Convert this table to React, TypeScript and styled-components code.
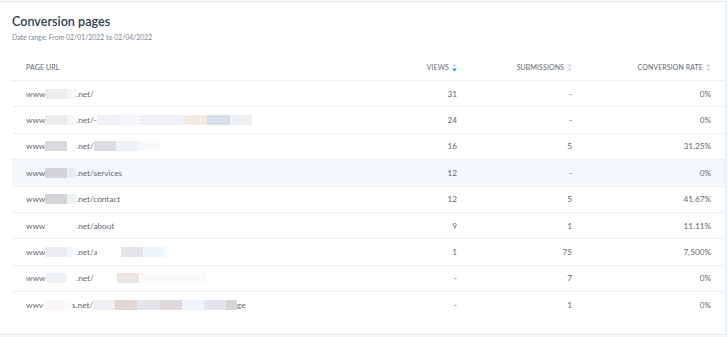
import React, { FC } from 'react';
import styled, { createGlobalStyle } from 'styled-components';

type Seg = string | { w: number; c: string };

interface PageRow {
	url: Seg[];
	views: string;
	submissions: string;
	rate: string;
	active?: boolean;
}

const rows: PageRow[] = [
	{ url: ['www', { w: 22, c: '#ececee' }, { w: 9, c: '#f6f7f9' }, '.net/'], views: '31', submissions: '-', rate: '0%' },
	{
		url: [
			'www',
			{ w: 22, c: '#ececee' },
			{ w: 9, c: '#f6f7f9' },
			'.net/-',
			{ w: 22, c: '#eff1f4' },
			{ w: 22, c: '#f3f7fb' },
			{ w: 44, c: '#eff1f4' },
			{ w: 22, c: '#f3e9e0' },
			{ w: 23, c: '#d9dfe8' },
			{ w: 22, c: '#eef0f3' },
		],
		views: '24',
		submissions: '-',
		rate: '0%',
	},
	{
		url: ['www', { w: 22, c: '#d9d9dd' }, { w: 9, c: '#ffffff' }, '.net/', { w: 22, c: '#dcdce0' }, { w: 22, c: '#eef2f5' }, { w: 22, c: '#f7f9fb' }],
		views: '16',
		submissions: '5',
		rate: '31.25%',
	},
	{
		url: ['www', { w: 22, c: '#d4d4d8' }, { w: 9, c: '#e9eef2' }, '.net/services'],
		views: '12',
		submissions: '-',
		rate: '0%',
		active: true,
	},
	{ url: ['www', { w: 22, c: '#d4d4d8' }, { w: 9, c: '#eaf3f0' }, '.net/contact'], views: '12', submissions: '5', rate: '41.67%' },
	{ url: ['www', { w: 31, c: '#ffffff' }, '.net/about'], views: '9', submissions: '1', rate: '11.11%' },
	{
		url: ['www', { w: 22, c: '#ececf0' }, { w: 9, c: '#f3f8fb' }, '.net/a', { w: 24, c: '#ffffff' }, { w: 22, c: '#e2e4e8' }, { w: 22, c: '#eef6fb' }],
		views: '1',
		submissions: '75',
		rate: '7,500%',
	},
	{
		url: ['www', { w: 22, c: '#eef2f6' }, { w: 9, c: '#ffffff' }, '.net/', { w: 23, c: '#ffffff' }, { w: 22, c: '#ebe6e2' }, { w: 67, c: '#fbf9f7' }],
		views: '-',
		submissions: '7',
		rate: '0%',
	},
	{
		url: [
			'wwv',
			{ w: 22, c: '#fbf7f8' },
			{ w: 7, c: '#fdfbfc' },
			's.net/',
			{ w: 22, c: '#eef0f4' },
			{ w: 22, c: '#e2d6d2' },
			{ w: 23, c: '#e3e3e8' },
			{ w: 22, c: '#dcd8dc' },
			{ w: 22, c: '#eef4fa' },
			{ w: 22, c: '#e3e5ea' },
			{ w: 11, c: '#d6d4d8' },
			'ge',
		],
		views: '-',
		submissions: '1',
		rate: '0%',
	},
];

const SortIcon: FC<{ active?: boolean }> = ({ active }) => (
	<SortSvg width="5" height="9" viewBox="0 0 5 9">
		<path d="M2.5 0.5 L4.8 3.4 H0.2 Z" fill="#cbd6e2" />
		<path d="M2.5 8.5 L4.8 5.6 H0.2 Z" fill={active ? '#00a4bd' : '#cbd6e2'} />
	</SortSvg>
);

const App: FC = () => {
	return (
		<>
			<GlobalStyle />
			<Card>
				<Title>Conversion pages</Title>
				<DateRange>Date range: From 02/01/2022 to 02/04/2022</DateRange>

				<Table>
					<HeadCell>Page URL</HeadCell>
					<HeadCell align="right">
						Views <SortIcon active />
					</HeadCell>
					<HeadCell align="right">
						Submissions <SortIcon />
					</HeadCell>
					<HeadCell align="right" last>
						Conversion rate <SortIcon />
					</HeadCell>

					{rows.map((r, i) => (
						<Row key={i} active={r.active}>
							<UrlCell>
								{r.url.map((s, j) =>
									typeof s === 'string' ? <span key={j}>{s}</span> : <Blur key={j} w={s.w} c={s.c} />
								)}
							</UrlCell>
							<Cell>{r.views}</Cell>
							<Cell>{r.submissions}</Cell>
							<Cell last>{r.rate}</Cell>
						</Row>
					))}
				</Table>
			</Card>
		</>
	);
};

export default App;

const GlobalStyle = createGlobalStyle`
	html, body {
		margin: 0;
		padding: 0;
		background: #f5f8fa;
	}

	body {
		font-family: Lato, 'Open Sans', sans-serif;
		color: #33475b;
	}
`;

const Card = styled.div`
	box-sizing: border-box;
	width: 726px;
	height: 334px;
	margin-top: 1px;
	background: #fff;
	border: 1px solid #e5eaf0;
	border-left: none;
	padding: 10px 0 0 12px;
`;

const Title = styled.h2`
	margin: 0;
	font-size: 12.6px;
	font-weight: 600;
	line-height: 20px;
	color: #2f3e4e;
`;

const DateRange = styled.div`
	font-size: 6.9px;
	line-height: 10px;
	color: #7d8894;
`;

const Table = styled.div`
	margin-top: 12px;
	display: grid;
	grid-template-columns: 1fr 110px 115px 151px;
`;

const HeadCell = styled.div<{ align?: 'left' | 'right'; last?: boolean }>`
	display: flex;
	align-items: center;
	justify-content: ${p => (p.align === 'right' ? 'flex-end' : 'flex-start')};
	gap: 3px;
	height: 26px;
	padding-left: 14px;
	padding-right: ${p => (p.last ? '14px' : p.align === 'right' ? '2px' : '0')};
	border-bottom: 1px solid #eaf0f6;
	font-size: 7px;
	text-transform: uppercase;
	letter-spacing: 0.1px;
	color: #5f6872;
`;

const SortSvg = styled.svg`
	display: block;
	flex-shrink: 0;
`;

const Row = styled.div<{ active?: boolean }>`
	display: contents;

	& > div {
		background: ${p => (p.active ? '#f5f8fa' : '#fff')};
	}

	&:last-child > div {
		border-bottom: none;
	}
`;

const Cell = styled.div<{ last?: boolean }>`
	display: flex;
	align-items: center;
	justify-content: flex-end;
	height: 26.4px;
	box-sizing: border-box;
	padding-right: ${p => (p.last ? '14px' : '2px')};
	border-bottom: 1px solid #eaf0f6;
	font-size: 8.2px;
	color: #5f6872;
`;

const UrlCell = styled.div`
	display: flex;
	align-items: center;
	height: 26.4px;
	box-sizing: border-box;
	padding-left: 14px;
	border-bottom: 1px solid #eaf0f6;
	font-size: 8.2px;
	color: #5f6872;
	white-space: nowrap;
	overflow: hidden;
`;

const Blur = styled.span<{ w: number; c: string }>`
	display: inline-block;
	width: ${p => p.w}px;
	height: 10px;
	background: ${p => p.c};
`;
